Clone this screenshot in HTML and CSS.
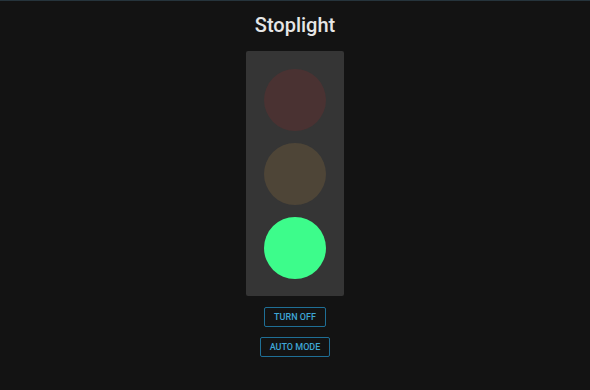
FILE: index.html
```html
<!DOCTYPE html>
<html lang="en">
<head>
    <meta charset="UTF-8">
    <meta name="viewport" content="width=device-width, initial-scale=1.0">
    <title>Stoplight</title>
    <link rel="stylesheet" href="styles.css">
</head>
<body>
    <div class="app">
        <h1>Stoplight</h1>

        <div class="housing">
            <div class="lamp red"></div>
            <div class="lamp yellow"></div>
            <div class="lamp green on"></div>
        </div>

        <div class="controls">
            <button class="btn">Turn off</button>
            <button class="btn">Auto mode</button>
        </div>
    </div>
</body>
</html>
```

FILE: styles.css
```css
:root {
    --bg: #131313;
    --housing: #353535;
    --accent: #3ea6d6;
    --accent-border: #1f6f96;
}

* {
    box-sizing: border-box;
    margin: 0;
    padding: 0;
    font-family: Roboto, 'Liberation Sans', sans-serif;
}

body {
    background: var(--bg);
    min-height: 100vh;
    border-top: 1px solid #26343c;
}

.app {
    display: flex;
    flex-direction: column;
    align-items: center;
    padding-top: 12px;
}

h1 {
    font-size: 20px;
    font-weight: 500;
    color: #e6e6e6;
    line-height: 24px;
    margin-bottom: 14px;
}

.housing {
    width: 98px;
    padding: 18px 18px 17px;
    background: var(--housing);
    border-radius: 2px;
    display: flex;
    flex-direction: column;
    gap: 12px;
}

.lamp {
    width: 62px;
    height: 62px;
    border-radius: 50%;
}

.red { background: #4a3232; }
.yellow { background: #4e4537; }
.green { background: #3a4a3e; }
.green.on { background: #3dfc8b; }

.controls {
    display: flex;
    flex-direction: column;
    align-items: center;
    gap: 10px;
    margin-top: 11px;
}

.btn {
    height: 20px;
    padding: 0 9px;
    background: transparent;
    border: 1px solid var(--accent-border);
    border-radius: 2px;
    color: var(--accent);
    font-size: 9px;
    font-weight: 500;
    text-transform: uppercase;
    cursor: pointer;
}
```
